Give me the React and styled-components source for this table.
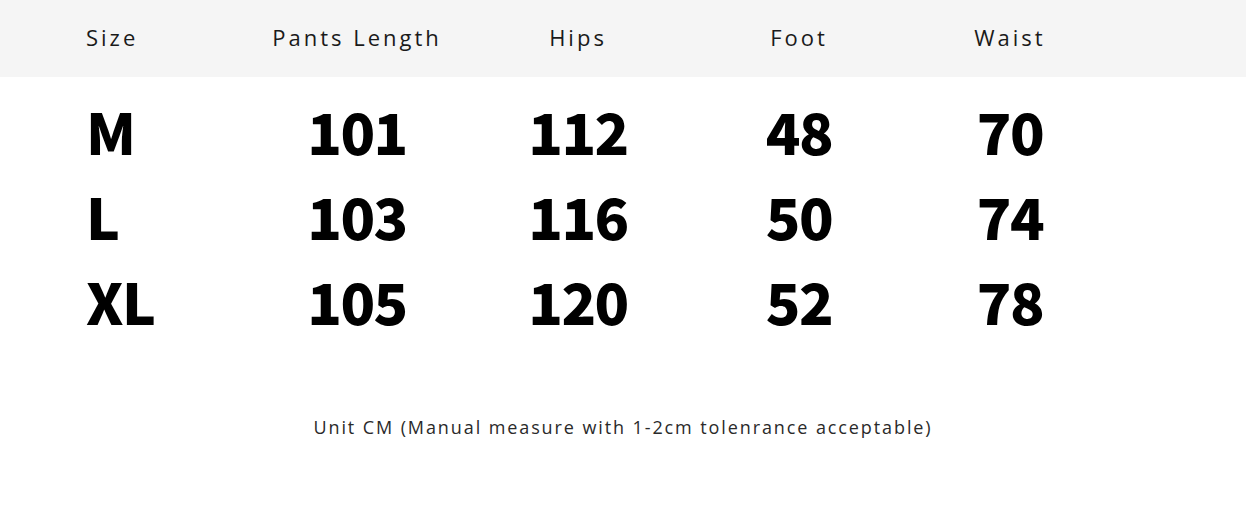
import styled, { createGlobalStyle } from 'styled-components'

const GlobalStyle = createGlobalStyle`
    html, body {
        margin: 0;
        padding: 0;
        background: #ffffff;
    }
`

const Page = styled.div`
    width: 1246px;
    height: 505px;
    background: #ffffff;
    overflow: hidden;
`

const Columns = styled.div`
    display: grid;
    grid-template-columns: 160px 222px 220px 222px 200px;
    padding-left: 86px;
    box-sizing: border-box;
`

const Header = styled(Columns)`
    height: 77px;
    padding-bottom: 4px;
    align-items: center;
    background-color: #f5f5f5;
`

const HeadCell = styled.div`
    font-family: "Open Sans", "Noto Sans", sans-serif;
    font-size: 22px;
    letter-spacing: 3px;
    color: #1a1a1a;
    text-align: ${({ $first }) => ($first ? 'left' : 'center')};
`

const Body = styled.div`
    padding-top: 11px;
`

const Row = styled(Columns)`
    height: 85px;
    align-items: center;
`

const Value = styled.div`
    font-family: "Noto Sans CJK SC", "Noto Sans", sans-serif;
    font-weight: 900;
    font-size: 57px;
    letter-spacing: -1.5px;
    line-height: 85px;
    color: #000;
    text-align: ${({ $first }) => ($first ? 'left' : 'center')};
`

const Note = styled.div`
    margin-top: 72px;
    text-align: center;
    font-family: "Open Sans", "Noto Sans", sans-serif;
    font-size: 18px;
    letter-spacing: 1.9px;
    color: #2a2a2a;
`

const headers = ['Size', 'Pants Length', 'Hips', 'Foot', 'Waist']
const rows = [
    ['M', '101', '112', '48', '70'],
    ['L', '103', '116', '50', '74'],
    ['XL', '105', '120', '52', '78'],
]

const App = () => {
    return (
        <Page>
            <GlobalStyle />
            <Header>
                {headers.map((h, i) => (
                    <HeadCell key={h} $first={i === 0}>{h}</HeadCell>
                ))}
            </Header>
            <Body>
                {rows.map((r) => (
                    <Row key={r[0]}>
                        {r.map((v, i) => (
                            <Value key={i} $first={i === 0}>{v}</Value>
                        ))}
                    </Row>
                ))}
            </Body>
            <Note>Unit CM (Manual measure with 1-2cm tolenrance acceptable)</Note>
        </Page>
    )
}

export default App
